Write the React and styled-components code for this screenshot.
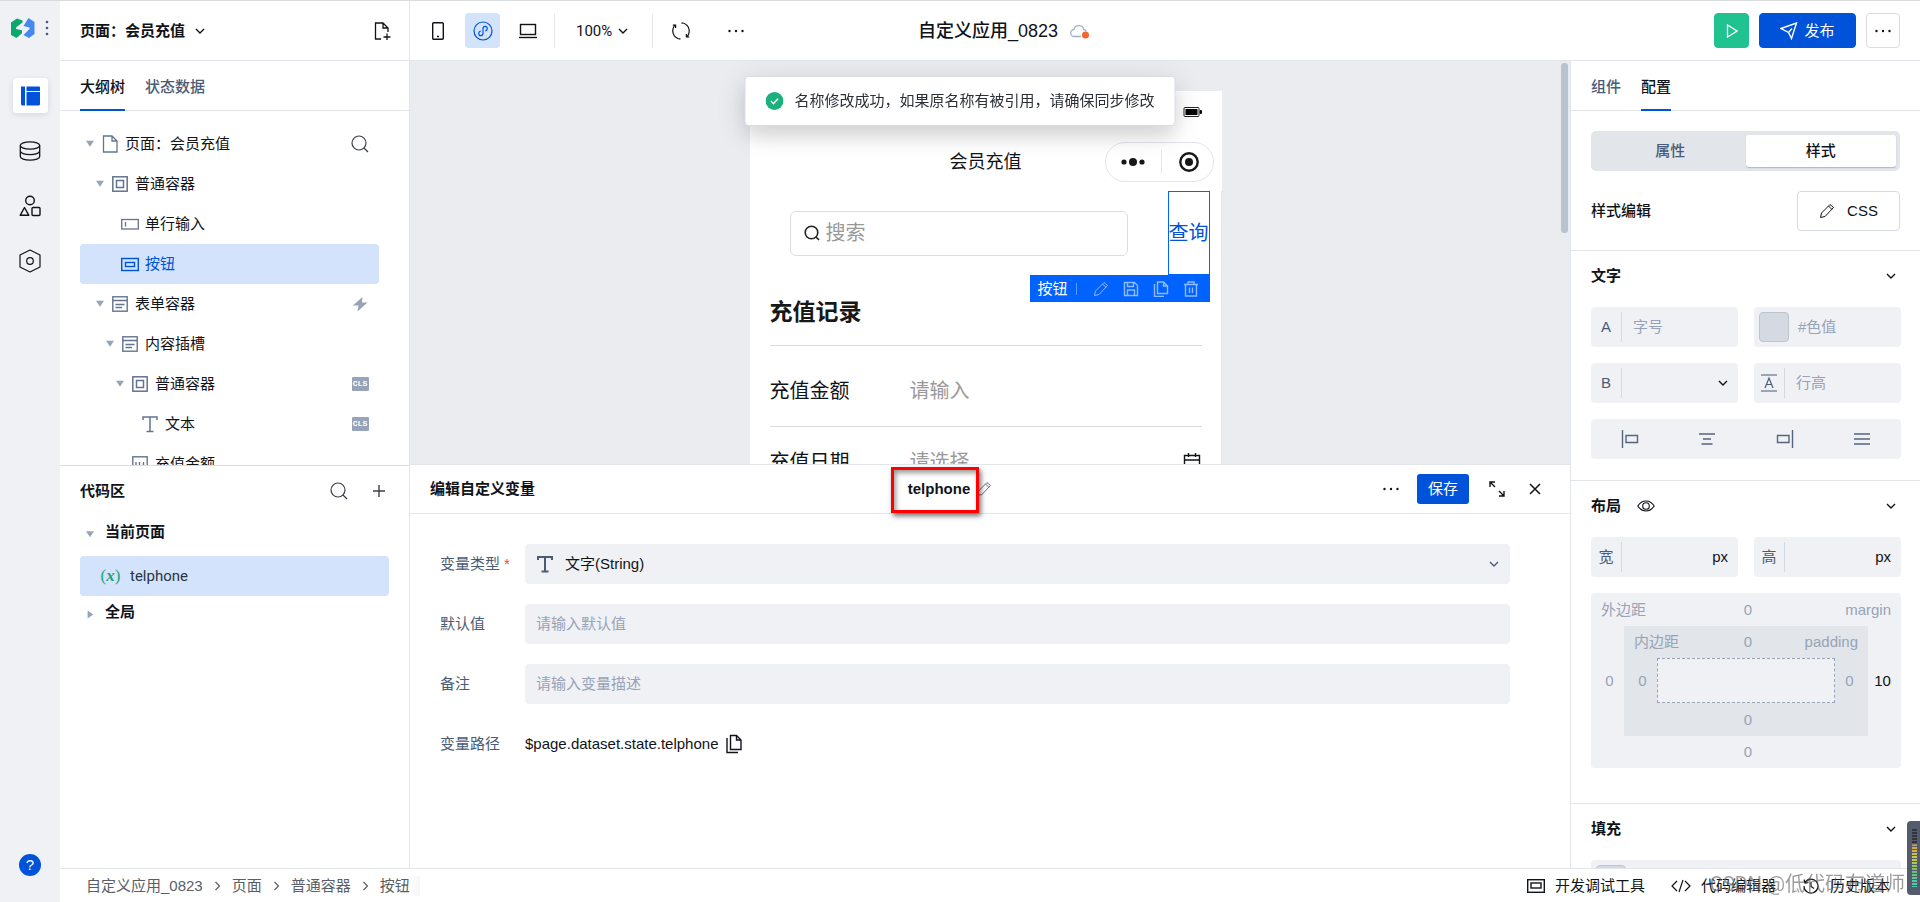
import React, { Fragment } from "react";
import styled, { createGlobalStyle, css } from "styled-components";

const color = {
  brand: "#0052d9",
  select: "#0062ff",
  active: "#d3e3fc",
  ink: "#101318",
  label: "#4b5b76",
  muted: "#97a3b7",
  line: "#e2e5eb",
  field: "#f0f1f5",
  canvas: "#ebecf0",
};

const GlobalStyle = createGlobalStyle`
  *, *::before, *::after {
    box-sizing: border-box;
  }

  body {
    margin: 0;
    background: #fff;
    color: ${color.ink};
    font: 15px/20px "Liberation Sans", "Noto Sans CJK SC", sans-serif;
  }

  button, input, select {
    margin: 0;
    padding: 0;
    border: 0;
    background: none;
    color: inherit;
    font: inherit;
  }

  button {
    cursor: pointer;
  }

  svg {
    display: block;
    flex: none;
  }

  h1, h2, h3, p {
    margin: 0;
    font-size: 15px;
  }
`;

/* ---------- icons ---------- */

const Icon = ({ w = 18, h = w, sw = 1, children, ...rest }) => (
  <svg
    width={w}
    height={h}
    viewBox={`0 0 ${w} ${h}`}
    fill="none"
    stroke="currentColor"
    strokeWidth={sw}
    aria-hidden="true"
    {...rest}
  >
    {children}
  </svg>
);

const Logo = () => (
  <svg width="24" height="20" viewBox="0 0 24 20" aria-hidden="true">
    <path
      fill="#0aa86e"
      d="M0 4.500 6 .6l5.500 2v2L5 9.500v1.500l6 1.200v3L5.500 20 0 17z"
    />
    <path
      fill="#4787f0"
      d="M17.500 0 23.500 4v12L18 20l-5.500-3 6-6V9.500l-6-1.500z"
    />
  </svg>
);

const Chevron = () => (
  <Icon w={10} sw={1.4}>
    <path d="M1 3l4 4 4-4" />
  </Icon>
);

const ChevronRight = () => (
  <Icon w={7} h={10} sw={1.2}>
    <path d="M1.500 1l4 4-4 4" />
  </Icon>
);

const Search = ({ sw = 1.2 }) => (
  <Icon w={18} sw={sw}>
    <circle cx="8" cy="8" r="7" />
    <path d="M13 13l4 4" />
  </Icon>
);

const Dots = () => (
  <Icon w={18} h={4} fill="currentColor" stroke="none">
    <circle cx="2.500" cy="2" r="1.200" />
    <circle cx="9" cy="2" r="1.200" />
    <circle cx="15.500" cy="2" r="1.200" />
  </Icon>
);

const Pencil = () => (
  <Icon w={16} sw={1}>
    <path d="M1.500 14.500l1-4.500 8.500-8.500 3.500 3L6 13.500zM9.500 3l3.300 3.300" />
  </Icon>
);

const Copy = () => (
  <Icon w={18} h={20} sw={1.4}>
    <path d="M5.500 1.500h6l4.500 4.500v9.500H5.500zM11.500 1.500V6H16M2 4v14.500h11" />
  </Icon>
);

const PageIcon = () => (
  <Icon w={18} sw={1.3}>
    <path d="M2.500 1h8.500l5 5v11H2.500zM11 1v5h5" />
  </Icon>
);

const BoxIcon = () => (
  <Icon w={18} sw={1.5}>
    <rect x="1.800" y="1.800" width="14.400" height="14.400" />
    <rect x="5.500" y="5.500" width="7" height="7" />
  </Icon>
);

const FormIcon = () => (
  <Icon w={18} sw={1.4}>
    <rect x="1.800" y="1.800" width="14.400" height="14.400" />
    <path d="M2 5.500h14M4.500 9.500h9M4.500 12.500h6.500" />
  </Icon>
);

const InputIcon = () => (
  <Icon w={18} sw={1.3}>
    <rect x=".7" y="4.500" width="16.600" height="9.500" />
    <path d="M4.500 7v4.500" />
  </Icon>
);

const ButtonIcon = () => (
  <Icon w={18} sw={1.4}>
    <rect x=".7" y="3.500" width="16.600" height="12" />
    <rect x="4.500" y="7.500" width="9" height="4" />
  </Icon>
);

const TextIcon = ({ sw = 1.5 }) => (
  <Icon w={18} sw={sw}>
    <path d="M2 5V2h14v3M9 2v14.500M5.500 16.500h7" />
  </Icon>
);

const NumberIcon = () => (
  <Icon w={18} sw={1.4}>
    <rect x="1.800" y="1.800" width="14.400" height="14.400" />
    <path d="M5 7v4M8.500 7v4M12.500 7v4" />
  </Icon>
);

const Bolt = () => (
  <Icon w={16} fill="currentColor" stroke="none">
    <path d="M10.500 1L.8 9.500h5.700L5.500 15.500 15.500 6.500H10z" />
  </Icon>
);

/* ---------- shell ---------- */

const Shell = styled.div`
  display: grid;
  grid-template-columns: 60px minmax(0, 1fr);
  height: 100vh;
  overflow: hidden;
  border-top: 1px solid #dadbdd;
`;

const Rail = styled.nav`
  display: flex;
  flex-direction: column;
  align-items: center;
  gap: 20px;
  padding-bottom: 26px;
  background: ${color.field};
`;

const RailTop = styled.div`
  display: flex;
  align-items: center;
  gap: 10px;
  height: 57px;
  padding-bottom: 4px;
`;

const RailButton = styled.button`
  display: grid;
  place-items: center;
  width: 35px;
  height: 35px;
  border-radius: 4px;
  ${(p) =>
    p.$active &&
    css`
      background: #fff;
      color: ${color.brand};
      box-shadow: 0 2px 6px rgba(30, 45, 80, 0.12);
    `}
`;

const Help = styled.button`
  width: 22px;
  height: 22px;
  margin-top: auto;
  border-radius: 50%;
  background: ${color.brand};
  color: #fff;
  line-height: 22px;
`;

const Main = styled.div`
  display: flex;
  flex-direction: column;
  min-width: 0;
  min-height: 0;
`;

const columns = css`
  display: grid;
  grid-template-columns: 350px minmax(0, 1fr) 350px;
`;

const TopBar = styled.header`
  ${columns}
  flex: none;
  height: 60px;
  border-bottom: 1px solid ${color.line};
`;

const PageName = styled.div`
  display: flex;
  align-items: center;
  justify-content: space-between;
  padding: 0 17px 0 20px;
  border-right: 1px solid ${color.line};
`;

const PageSwitch = styled.button`
  display: flex;
  align-items: center;
  gap: 10px;
  font-weight: 600;
`;

const IconButton = styled.button`
  display: grid;
  place-items: center;
  width: ${(p) => p.$w || 20}px;
  height: 20px;
  color: ${(p) => p.$color || "inherit"};
`;

const Tools = styled.div`
  display: grid;
  grid-template-columns: 1fr auto 1fr;
  align-items: center;
`;

const ToolGroup = styled.div`
  display: flex;
  align-items: center;
  padding-left: 10px;
`;

const Tool = styled.button`
  display: grid;
  place-items: center;
  width: 35px;
  height: 35px;
  margin-right: ${(p) => p.$gap || 10}px;
  border-radius: 4px;
  background: ${(p) => (p.$active ? color.active : "none")};
  color: ${(p) => (p.$active ? color.brand : "inherit")};
`;

const Rule = styled.span`
  width: 1px;
  height: ${(p) => p.$h || 34}px;
  background: ${(p) => p.$color || color.line};
`;

const Zoom = styled.button`
  display: flex;
  align-items: center;
  gap: 6px;
  padding: 0 24px 0 21px;
  font-family: Roboto, sans-serif;
`;

const MoreTools = styled.div`
  display: flex;
  padding-left: 10px;
`;

const AppTitle = styled.h1`
  display: flex;
  align-items: center;
  gap: 12px;
  padding-left: 28px;
  font-size: 18px;
  font-weight: 500;
`;

const Actions = styled.div`
  display: flex;
  align-items: center;
  justify-content: flex-end;
  gap: 10px;
  padding-right: 20px;
`;

const Action = styled.button`
  display: flex;
  align-items: center;
  justify-content: center;
  gap: 6px;
  width: ${(p) => p.$w || 35}px;
  height: 35px;
  border: 1px solid ${(p) => p.$border || p.$bg};
  border-radius: 4px;
  background: ${(p) => p.$bg};
  color: ${(p) => p.$color || "#fff"};
`;

const Work = styled.div`
  ${columns}
  grid-template-rows: minmax(0, 1fr);
  flex: 1;
  min-height: 0;
`;

const Split = styled.div`
  display: grid;
  grid-template-rows: ${(p) => p.$top || "50%"} minmax(0, 1fr);
  min-width: 0;
  min-height: 0;
`;

/* ---------- left column ---------- */

const LeftColumn = styled(Split)`
  border-right: 1px solid ${color.line};
`;

const Pane = styled.section`
  display: flex;
  flex-direction: column;
  min-height: 0;
  overflow: hidden;
  border-top: ${(p) => (p.$ruled ? `1px solid #d9dce3` : "0")};
`;

const Tabs = styled.div`
  display: flex;
  flex: none;
  gap: 20px;
  height: 50px;
  padding: 0 20px;
  border-bottom: 1px solid ${color.line};
`;

const Tab = styled.button`
  height: 50px;
  padding-top: 3px;
  border-bottom: 2px solid ${(p) => (p.$active ? color.brand : "transparent")};
  color: ${(p) => (p.$active ? color.ink : color.label)};
  font-weight: 500;
`;

const Tree = styled.div`
  flex: 1;
  min-height: 0;
  overflow: hidden;
  padding: 13px 30px 0 20px;
`;

const TreeRow = styled.div`
  display: flex;
  align-items: center;
  height: 40px;
  padding: 0 10px 0 ${(p) => 6 + p.$level * 10}px;
  border-radius: 4px;
  background: ${(p) => (p.$active ? color.active : "none")};
  color: ${(p) => (p.$active ? color.brand : color.ink)};
`;

const Caret = styled.span`
  width: 8px;
  height: 8px;
  flex: none;
  background: ${(p) => (p.$hidden ? "none" : color.muted)};
  clip-path: ${(p) =>
    p.$closed
      ? "polygon(20% 0, 90% 50%, 20% 100%)"
      : "polygon(0 10%, 100% 10%, 50% 85%)"};
`;

const TreeIcon = styled.span`
  margin: 0 6px 0 7px;
  color: ${(p) => (p.$active ? color.brand : "#64748f")};
`;

const TreeEnd = styled.span`
  display: grid;
  place-items: center;
  min-width: 18px;
  margin-left: auto;
  color: ${(p) => (p.$dark ? "#3a3f48" : color.muted)};
`;

const Cls = styled.span`
  width: 17px;
  height: 14px;
  border-radius: 1px;
  background: ${color.muted};
  color: #fff;
  font: bold 8px/14px "Liberation Mono", monospace;
  text-align: center;
`;

const CodeHead = styled.div`
  display: flex;
  align-items: center;
  gap: 20px;
  height: 50px;
  padding: 0 20px;

  h2 {
    margin-right: auto;
    font-weight: 600;
  }
`;

const CodeGroup = styled.button`
  display: flex;
  align-items: center;
  gap: 11px;
  width: 100%;
  height: 40px;
  padding: 0 0 8px 26px;
  font-weight: 600;

  ${Caret} {
    margin-top: 6px;
  }
`;

const CodeItem = styled.button`
  display: flex;
  align-items: center;
  gap: 8px;
  height: 40px;
  margin: 0 20px;
  padding-left: 19px;
  border-radius: 4px;
  background: ${color.active};
  color: #2a3342;
  font-family: Roboto, sans-serif;
`;

const VarMark = styled.span`
  width: 23px;
  color: #1fa46e;
  font: 17px/20px "Liberation Serif", serif;
  text-align: center;

  i {
    font-weight: bold;
  }
`;

/* ---------- canvas ---------- */

const Canvas = styled.div`
  display: flex;
  min-height: 0;
  overflow: hidden;
  padding: 30px 0 0;
  background: ${color.canvas};
`;

const Phone = styled.div`
  width: 472px;
  margin: 0 auto;
`;

const ScrollTrack = styled.div`
  width: 8px;
  margin: -28px 1px 0 0;
  padding-right: 1px;
`;

const ScrollThumb = styled.div`
  height: 170px;
  border-radius: 3px;
  background: #b9c3ce;
`;

const StatusBar = styled.div`
  display: flex;
  justify-content: flex-end;
  height: 41px;
  padding: 16px 19px 0 0;
  background: #fff;
`;

const NavBar = styled.div`
  display: grid;
  grid-template-columns: 1fr auto 1fr;
  align-items: center;
  height: 59px;
  padding: 0 8px;
  background: #fff;
  font-size: 18px;
`;

const Capsule = styled.div`
  display: flex;
  align-items: center;
  justify-content: space-between;
  justify-self: end;
  width: 109px;
  height: 40px;
  padding: 0 14px 0 15px;
  border: 1px solid ${color.line};
  border-radius: 20px;
`;

const PhoneBody = styled.div`
  height: 340px;
  background: #fff;
  border-right: 1px solid ${color.line};
  font-size: 20px;
  line-height: 28px;
`;

const SearchRow = styled.div`
  display: flex;
  align-items: center;
  justify-content: space-between;
  height: 84px;
  padding: 0 11px 0 40px;
`;

const SearchBox = styled.label`
  display: flex;
  align-items: center;
  gap: 6px;
  width: 338px;
  height: 45px;
  padding-left: 13px;
  border: 1px solid #dcdddf;
  border-radius: 6px;
  color: #222;
`;

const PlainInput = styled.input`
  flex: 1;
  width: 100%;
  min-width: 0;
  outline: none;

  &::placeholder {
    color: ${(p) => p.$hint || color.muted};
    opacity: 1;
  }
`;

const Picked = styled.div`
  position: relative;
  display: grid;
  place-items: center;
  width: 42px;
  height: 84px;
  border: 1px solid ${color.select};
  color: ${color.brand};
  white-space: nowrap;
`;

const PickedBar = styled.div`
  position: absolute;
  top: calc(100% + 1px);
  right: -1px;
  display: flex;
  align-items: center;
  gap: 10px;
  width: 180px;
  height: 27px;
  padding-left: 8px;
  background: ${color.select};
  color: #8fbaff;
  font-size: 15px;

  span:first-child {
    margin-right: -2px;
    color: #fff;
  }

  ${Rule} {
    margin-right: 4px;
  }
`;

const RecordHead = styled.h2`
  height: 71px;
  margin: 0 19px 10px 20px;
  border-bottom: 1px solid #dcdcdc;
  color: #181818;
  font-size: 23px;
  line-height: 74px;
`;

const RecordRow = styled.label`
  display: grid;
  grid-template-columns: 140px minmax(0, 1fr) auto;
  align-items: center;
  height: 71px;
  margin: 0 19px 0 20px;
  border-bottom: 1px solid #dcdcdc;
`;

/* ---------- variable editor ---------- */

const Editor = styled.section`
  min-height: 0;
  overflow: hidden;
  background: #fff;
  border-top: 1px solid ${color.line};
`;

const EditorHead = styled.div`
  display: flex;
  align-items: center;
  justify-content: space-between;
  height: 49px;
  padding: 0 25px 0 20px;
  border-bottom: 1px solid ${color.line};

  h2 {
    font-weight: 600;
  }
`;

const VarName = styled.div`
  position: relative;
  display: flex;
  align-items: center;
  gap: 6px;
  color: #66707f;
  font-weight: bold;

  b {
    color: ${color.ink};
  }
`;

const Highlight = styled.span`
  position: absolute;
  top: -12px;
  left: -17px;
  width: 88px;
  height: 46px;
  border: 3px solid #f00;
  box-shadow: 2px 3px 5px rgba(0, 0, 0, 0.55),
    inset 2px 3px 5px rgba(0, 0, 0, 0.4);
  pointer-events: none;
`;

const EditorActions = styled.div`
  display: flex;
  align-items: center;
  gap: 16px;
  padding-left: 16px;
`;

const Save = styled.button`
  width: 52px;
  height: 30px;
  border-radius: 3px;
  background: ${color.brand};
  color: #fff;
`;

const EditorForm = styled.form`
  display: grid;
  grid-template-columns: 85px minmax(0, 1fr);
  row-gap: 20px;
  padding: 30px 60px 0 30px;
`;

const Label = styled.label`
  height: 40px;
  color: ${color.label};
  line-height: 40px;

  i {
    margin-left: 4px;
    color: #e5484d;
    font-style: normal;
  }
`;

const Field = styled.div`
  display: flex;
  align-items: center;
  gap: 11px;
  height: 40px;
  padding: 0 11px;
  border-radius: 4px;
  background: ${color.field};
  color: ${(p) => p.$color || color.ink};
`;

const PlainSelect = styled.select`
  flex: 1;
  min-width: 0;
  height: 30px;
  appearance: none;
  outline: none;
  color: ${color.ink};
`;

const PathText = styled.div`
  display: flex;
  align-items: center;
  gap: 6px;
  height: 40px;
`;

/* ---------- right column ---------- */

const Config = styled.aside`
  display: flex;
  flex-direction: column;
  min-height: 0;
  overflow: hidden;
  border-left: 1px solid ${color.line};
`;

const Segment = styled.div`
  display: grid;
  grid-template-columns: 1fr 1fr;
  height: 40px;
  margin: 20px;
  padding: 4px;
  flex: none;
  border-radius: 5px;
  background: #e2e5e9;
`;

const SegmentItem = styled.button`
  border-radius: 3px;
  background: ${(p) => (p.$active ? "#fff" : "none")};
  box-shadow: ${(p) => (p.$active ? "0 1px 1px #aebac8" : "none")};
  color: ${(p) => (p.$active ? color.ink : color.label)};
  font-weight: 500;
`;

const StyleRow = styled.div`
  display: flex;
  align-items: center;
  justify-content: space-between;
  flex: none;
  padding: 0 20px 19px;
  font-weight: 500;
`;

const CssButton = styled.button`
  display: flex;
  align-items: center;
  justify-content: center;
  gap: 12px;
  width: 103px;
  height: 40px;
  border: 1px solid #d5dae3;
  border-radius: 4px;
`;

const Group = styled.section`
  flex: none;
  padding: 0 19px ${(p) => p.$pb || 0}px 20px;
  border-top: 1px solid ${color.line};
`;

const GroupHead = styled.div`
  display: flex;
  align-items: center;
  gap: 16px;
  height: 50px;
  margin-bottom: 6px;

  h3 {
    font-weight: 600;
  }

  svg:last-child {
    margin: 0 5px 0 auto;
  }
`;

const Pair = styled.div`
  display: grid;
  grid-template-columns: repeat(2, minmax(0, 1fr));
  gap: 16px;
  margin-bottom: 16px;
`;

const Cell = styled.label`
  display: flex;
  align-items: center;
  gap: 11px;
  height: 40px;
  padding: 0 10px 0 0;
  border-radius: 4px;
  background: ${color.field};
  color: ${color.ink};
`;

const CellMark = styled.span`
  display: grid;
  place-items: center;
  width: 31px;
  height: 30px;
  flex: none;
  border-right: 1px solid #d3d9e1;
  color: ${color.label};
`;

const Swatch = styled.span`
  width: 30px;
  height: 30px;
  flex: none;
  margin: 0 -2px 0 5px;
  border: 1px solid #bcc4ce;
  border-radius: 4px;
  background: #d5dae2;
`;

const AlignBar = styled.div`
  display: grid;
  grid-template-columns: repeat(4, 1fr);
  height: 40px;
  border-radius: 4px;
  background: ${color.field};
  color: #56647d;
`;

const AlignButton = styled.button`
  display: grid;
  place-items: center;
`;

const Spacing = styled.div`
  display: grid;
  grid-template-columns: 33px minmax(0, 1fr) 33px;
  grid-template-rows: ${(p) => p.$rows};
  place-items: center;
  border-radius: ${(p) => (p.$inner ? 0 : 4)}px;
  background: ${(p) => (p.$inner ? "#e2e5e9" : color.field)};
  color: ${color.muted};
  width: 100%;
`;

const SpacingHead = styled.div`
  display: grid;
  grid-template-columns: 1fr 32px 1fr;
  grid-column: 1 / -1;
  justify-self: stretch;
  padding: 0 10px;

  span:last-child {
    text-align: right;
  }
`;

const SpacingFoot = styled.div`
  grid-column: 1 / -1;
`;

const SpacingInput = styled.input`
  width: 32px;
  padding: ${(p) => (p.$right ? "0 4px 0 0" : "0 0 0 4px")};
  text-align: center;
  color: ${(p) => (p.$set ? color.ink : color.muted)};
`;

const Content = styled.div`
  align-self: stretch;
  justify-self: stretch;
  border: 1px dashed ${color.muted};
  background: ${color.field};
`;

/* ---------- footer and overlays ---------- */

const Footer = styled.footer`
  display: flex;
  align-items: center;
  justify-content: space-between;
  flex: none;
  height: 34px;
  padding: 0 30px 0 26px;
  border-top: 1px solid ${color.line};
`;

const Crumbs = styled.nav`
  display: flex;
  align-items: center;
  gap: 11px;
  color: #5a5e66;
`;

const Crumb = styled.a`
  color: inherit;
  text-decoration: none;

  &:last-child {
    margin-right: -10px;
    padding-right: 10px;
    background: linear-gradient(90deg, #fff 70%, #f5f6f8);
  }
`;

const FooterTools = styled.div`
  display: flex;
  gap: 26px;
`;

const FooterTool = styled.button`
  display: flex;
  align-items: center;
  gap: 10px;
`;

const Toast = styled.div`
  position: fixed;
  top: 76px;
  left: 50%;
  display: flex;
  align-items: center;
  gap: 11px;
  height: 50px;
  padding: 0 20px;
  transform: translateX(-50%);
  border: 1px solid #d8dce6;
  border-radius: 4px;
  background: #fff;
  box-shadow: 0 6px 30px rgba(0, 0, 0, 0.14), 0 12px 18px rgba(0, 0, 0, 0.08);
  color: #2b2f36;
  white-space: nowrap;
`;

const Watermark = styled.div`
  position: fixed;
  right: 15px;
  bottom: 5px;
  color: rgba(90, 90, 90, 0.6);
  font: 20px/26px Roboto, "Noto Sans CJK SC", sans-serif;
  pointer-events: none;
`;

const Gauge = styled.div`
  position: fixed;
  right: 0;
  bottom: 7px;
  width: 13px;
  height: 74px;
  padding: 8px 3px 8px 5px;
  border-radius: 4px 0 0 4px;
  background: #535b6c;
`;

const GaugeBar = styled.div`
  height: 100%;
  background: repeating-linear-gradient(
      180deg,
      transparent 0 2px,
      #535b6c 2px 3px
    ),
    linear-gradient(180deg, #2f3540 26%, #d8a04c 27%, #c9c94c 50%, #6cc07c 75%, #4cc9b8);
`;

/* ---------- data ---------- */

const treeRows = [
  { name: "页面：会员充值", icon: PageIcon, level: 0, open: true, end: "search" },
  { name: "普通容器", icon: BoxIcon, level: 1, open: true },
  { name: "单行输入", icon: InputIcon, level: 2 },
  { name: "按钮", icon: ButtonIcon, level: 2, active: true },
  { name: "表单容器", icon: FormIcon, level: 1, open: true, end: "bolt" },
  { name: "内容插槽", icon: FormIcon, level: 2, open: true },
  { name: "普通容器", icon: BoxIcon, level: 3, open: true, end: "cls" },
  { name: "文本", icon: TextIcon, level: 4, end: "cls" },
  { name: "充值金额", icon: NumberIcon, level: 3 },
];

const crumbs = ["自定义应用_0823", "页面", "普通容器", "按钮"];

/* ---------- parts ---------- */

const SideRail = () => (
  <Rail>
    <RailTop>
      <Logo />
      <Icon w={4} h={16} fill="#4b5b76" stroke="none">
        <circle cx="2" cy="2" r="1.300" />
        <circle cx="2" cy="8" r="1.300" />
        <circle cx="2" cy="14" r="1.300" />
      </Icon>
    </RailTop>
    <RailButton $active aria-label="页面设计">
      <Icon w={20} fill="currentColor" stroke="none">
        <path d="M1 .5h4v19H2l-1-1zM6.500.5H19a1 1 0 0 1 1 1v3.500H6.500zM6.500 6H20v12.500l-1 1H6.500z" />
      </Icon>
    </RailButton>
    <RailButton aria-label="数据源">
      <Icon w={22} h={20} sw={1.3}>
        <ellipse cx="11" cy="4.500" rx="9.700" ry="3.700" />
        <path d="M1.300 4.500v11c0 2 4.300 3.700 9.700 3.700s9.700-1.700 9.700-3.700v-11M1.300 10c0 2 4.300 3.700 9.700 3.700s9.700-1.700 9.700-3.700" />
      </Icon>
    </RailButton>
    <RailButton aria-label="组件库">
      <Icon w={22} sw={1.4}>
        <circle cx="11" cy="5.500" r="4.300" />
        <path d="M5.500 12.500l4.300 7.800H1.200z" strokeLinejoin="round" />
        <rect x="13" y="12.500" width="8" height="8" rx="1" />
      </Icon>
    </RailButton>
    <RailButton aria-label="设置">
      <Icon w={22} h={24} sw={1.2}>
        <path d="M11 1l10 5v12l-10 5L1 18V6z" strokeLinejoin="round" />
        <circle cx="11" cy="12" r="3.300" />
      </Icon>
    </RailButton>
    <Help aria-label="帮助">?</Help>
  </Rail>
);

const Header = () => (
  <TopBar>
    <PageName>
      <PageSwitch>
        页面：会员充值
        <Chevron />
      </PageSwitch>
      <IconButton aria-label="新建页面">
        <Icon w={18} h={20} sw={1.3}>
          <path d="M8 18H2.500V2H10l5 5v4M10 2v5h5M14 12.500v6.500M10.500 16h7" />
        </Icon>
      </IconButton>
    </PageName>
    <Tools>
      <ToolGroup>
        <Tool aria-label="手机">
          <Icon w={14} h={18} sw={1.4}>
            <rect x="1.700" y=".7" width="10.600" height="16.600" rx="1" />
            <path d="M6 14.500h2" />
          </Icon>
        </Tool>
        <Tool $active aria-label="小程序">
          <Icon w={20} sw={1.2}>
            <circle cx="10" cy="10" r="9" />
            <path d="M12.300 9.900c1.300-.3 2-1.200 2-2.300 0-1.300-1-2.200-2.200-2.200S10 6.300 10 7.700v4.600c0 1.400-.9 2.300-2.100 2.300s-2.200-.9-2.200-2.200c0-1.100.7-2 2-2.300" />
          </Icon>
        </Tool>
        <Tool $gap={9} aria-label="电脑">
          <Icon w={18} h={16} sw={1.4}>
            <rect x="1.500" y="1.500" width="15" height="10" />
            <path d="M0 14.500h18" />
          </Icon>
        </Tool>
        <Rule />
        <Zoom>
          100%
          <Chevron />
        </Zoom>
        <Rule />
        <MoreTools>
          <Tool $gap={20} aria-label="刷新">
            <Icon w={20} sw={1.2}>
              <path d="M7.500 17.800A8.200 8.200 0 0 1 4.200 4.200M12.500 2.200a8.200 8.200 0 0 1 3.300 13.600" />
              <path d="M1.800 4.200h2.800V7M18.200 15.800h-2.800V13M7.500 17.800h2M12.500 2.200h-2" />
            </Icon>
          </Tool>
          <Tool aria-label="更多工具">
            <Dots />
          </Tool>
        </MoreTools>
      </ToolGroup>
      <AppTitle>
        自定义应用_0823
        <Icon w={20} h={16} sw={1.3} color="#a5afc0">
          <path d="M11 13.500H4.500a3.500 3.500 0 0 1-.5-7 5 5 0 0 1 9.700 0 3.500 3.500 0 0 1 2.500 1.800" />
          <circle cx="15.500" cy="12" r="3.500" fill="#f0682e" stroke="none" />
        </Icon>
      </AppTitle>
      <span />
    </Tools>
    <Actions>
      <Action $bg="#20c290" aria-label="预览">
        <Icon w={12} h={14} sw={1.3}>
          <path d="M1.500 1v12L11 7z" />
        </Icon>
      </Action>
      <Action $bg={color.brand} $w={97}>
        <Icon w={18} sw={1.4}>
          <path d="M1 6.500L16.500 1l-5 15.500-3-6z M8.500 10.500l3.500-4" />
        </Icon>
        发布
      </Action>
      <Action
        $bg="#fff"
        $border="#d8dce6"
        $color={color.ink}
        $w={34}
        aria-label="更多"
      >
        <Dots />
      </Action>
    </Actions>
  </TopBar>
);

const Outline = () => (
  <LeftColumn>
    <Pane>
      <Tabs role="tablist">
        <Tab role="tab" $active>
          大纲树
        </Tab>
        <Tab role="tab">状态数据</Tab>
      </Tabs>
      <Tree>
        {treeRows.map(({ name, icon: Glyph, level, open, active, end }, i) => (
          <TreeRow key={i} $level={level} $active={active}>
            <Caret $hidden={!open} />
            <TreeIcon $active={active}>
              <Glyph />
            </TreeIcon>
            {name}
            {end && (
              <TreeEnd $dark={end === "search"}>
                {end === "search" && <Search />}
                {end === "bolt" && <Bolt />}
                {end === "cls" && <Cls>CLS</Cls>}
              </TreeEnd>
            )}
          </TreeRow>
        ))}
      </Tree>
    </Pane>
    <Pane $ruled>
      <CodeHead>
        <h2>代码区</h2>
        <IconButton $color="#3a3f48" aria-label="搜索代码">
          <Search />
        </IconButton>
        <IconButton $color="#3a3f48" aria-label="新建">
          <Icon w={12} sw={1.4}>
            <path d="M6 0v12M0 6h12" />
          </Icon>
        </IconButton>
      </CodeHead>
      <CodeGroup>
        <Caret />
        当前页面
      </CodeGroup>
      <CodeItem>
        <VarMark>
          (<i>x</i>)
        </VarMark>
        telphone
      </CodeItem>
      <CodeGroup>
        <Caret $closed />
        全局
      </CodeGroup>
    </Pane>
  </LeftColumn>
);

const PhonePreview = () => (
  <Canvas>
    <Phone>
      <StatusBar>
        <Icon w={20} h={10}>
          <rect x="1" y=".5" width="15" height="9" rx="1" stroke="#222" />
          <rect x="2.500" y="2" width="12" height="6" fill="#000" stroke="none" />
          <path d="M17 3.500h1.500v3H17z" fill="#000" />
        </Icon>
      </StatusBar>
      <NavBar>
        <span />
        会员充值
        <Capsule>
          <Icon w={24} h={8} fill="#181818" stroke="none">
            <circle cx="3" cy="4" r="2.600" />
            <circle cx="12" cy="4" r="4" />
            <circle cx="21" cy="4" r="2.600" />
          </Icon>
          <Rule $h={23} />
          <Icon w={20} sw={2.4} color="#181818">
            <circle cx="10" cy="10" r="8.700" />
            <circle cx="10" cy="10" r="4" fill="#181818" stroke="none" />
          </Icon>
        </Capsule>
      </NavBar>
      <PhoneBody>
        <SearchRow>
          <SearchBox>
            <Icon w={16} sw={1.6}>
              <circle cx="7.500" cy="7.500" r="6.300" />
              <path d="M12 12l3 3" />
            </Icon>
            <PlainInput $hint="#999" placeholder="搜索" aria-label="搜索" />
          </SearchBox>
          <Picked>
            查询
            <PickedBar>
              <span>按钮</span>
              <Rule $h={12} $color="#5c9bff" />
              <IconButton aria-label="编辑">
                <Pencil />
              </IconButton>
              <IconButton aria-label="存为区块">
                <Icon w={16} sw={1.4}>
                  <path d="M1.500 1.500h10l3 3v10h-13zM4.500 1.500v4h6v-4M4.500 14.500V9h7v5.500" />
                </Icon>
              </IconButton>
              <IconButton aria-label="复制">
                <Icon w={16} sw={1.4}>
                  <path d="M4.500 1h6l4 4v7.500h-10zM10.500 1v4h4M1.500 3v12.500H11" />
                </Icon>
              </IconButton>
              <IconButton aria-label="删除">
                <Icon w={16} sw={1.4}>
                  <path d="M1 3.500h14M5 3.500V1h6v2.500M2.500 3.500v11.500h11V3.500M6.500 6.500v5.500M9.500 6.500v5.500" />
                </Icon>
              </IconButton>
            </PickedBar>
          </Picked>
        </SearchRow>
        <RecordHead>充值记录</RecordHead>
        <RecordRow>
          充值金额
          <PlainInput $hint="#999" placeholder="请输入" />
        </RecordRow>
        <RecordRow>
          充值日期
          <PlainInput $hint="#999" placeholder="请选择" />
          <Icon w={20} sw={1.4}>
            <path d="M2.500 3.500h15v14h-15zM2.500 8h15M6.500 1v4M13.500 1v4" />
          </Icon>
        </RecordRow>
      </PhoneBody>
    </Phone>
    <ScrollTrack>
      <ScrollThumb />
    </ScrollTrack>
  </Canvas>
);

const VariableEditor = () => (
  <Editor>
    <EditorHead>
      <h2>编辑自定义变量</h2>
      <VarName>
        <b>telphone</b>
        <IconButton $w={16} aria-label="修改名称">
          <Pencil />
        </IconButton>
        <Highlight />
      </VarName>
      <EditorActions>
        <IconButton aria-label="更多">
          <Dots />
        </IconButton>
        <Save>保存</Save>
        <IconButton $w={24} aria-label="展开">
          <Icon w={16} sw={1.4}>
            <path d="M1 6V1h5M1 1l5 5M15 10v5h-5M15 15l-5-5" />
          </Icon>
        </IconButton>
        <IconButton aria-label="关闭">
          <Icon w={12} sw={1.5}>
            <path d="M1 1l10 10M11 1L1 11" />
          </Icon>
        </IconButton>
      </EditorActions>
    </EditorHead>
    <EditorForm>
      <Label htmlFor="var-type">
        变量类型<i>*</i>
      </Label>
      <Field $color={color.label}>
        <TextIcon sw={2} />
        <PlainSelect id="var-type">
          <option>文字(String)</option>
        </PlainSelect>
        <Chevron />
      </Field>
      <Label htmlFor="var-default">默认值</Label>
      <Field>
        <PlainInput id="var-default" placeholder="请输入默认值" />
      </Field>
      <Label htmlFor="var-note">备注</Label>
      <Field>
        <PlainInput id="var-note" placeholder="请输入变量描述" />
      </Field>
      <Label as="span">变量路径</Label>
      <PathText>
        $page.dataset.state.telphone
        <IconButton $w={18} aria-label="复制路径">
          <Copy />
        </IconButton>
      </PathText>
    </EditorForm>
  </Editor>
);

const StylePanel = () => (
  <Config>
    <Tabs role="tablist">
      <Tab role="tab">组件</Tab>
      <Tab role="tab" $active>
        配置
      </Tab>
    </Tabs>
    <Segment>
      <SegmentItem>属性</SegmentItem>
      <SegmentItem $active>样式</SegmentItem>
    </Segment>
    <StyleRow>
      样式编辑
      <CssButton>
        <Pencil />
        CSS
      </CssButton>
    </StyleRow>
    <Group $pb={21}>
      <GroupHead>
        <h3>文字</h3>
        <Chevron />
      </GroupHead>
      <Pair>
        <Cell>
          <CellMark>A</CellMark>
          <PlainInput placeholder="字号" />
        </Cell>
        <Cell>
          <Swatch />
          <PlainInput placeholder="#色值" aria-label="色值" />
        </Cell>
        <Cell>
          <CellMark>B</CellMark>
          <PlainSelect aria-label="字重">
            <option></option>
          </PlainSelect>
          <Chevron />
        </Cell>
        <Cell>
          <CellMark>
            <Icon w={16} h={18} sw={1.2}>
              <path d="M0 1h16M0 17h16M4 14l4-10 4 10M5.500 10.500h5" />
            </Icon>
          </CellMark>
          <PlainInput placeholder="行高" aria-label="行高" />
        </Cell>
      </Pair>
      <AlignBar>
        <AlignButton aria-label="左对齐">
          <Icon w={18} sw={1.4}>
            <path d="M1.500 0v18M5 5.500h11.500v7H5z" />
          </Icon>
        </AlignButton>
        <AlignButton aria-label="居中">
          <Icon w={16} sw={1.3}>
            <path d="M0 3h16M4 8h8M2.500 13h11" />
          </Icon>
        </AlignButton>
        <AlignButton aria-label="右对齐">
          <Icon w={18} sw={1.4}>
            <path d="M16.500 0v18M13 5.500H1.500v7H13z" />
          </Icon>
        </AlignButton>
        <AlignButton aria-label="两端对齐">
          <Icon w={16} sw={1.3}>
            <path d="M0 3h16M0 8h16M0 13h16" />
          </Icon>
        </AlignButton>
      </AlignBar>
    </Group>
    <Group $pb={35}>
      <GroupHead>
        <h3>布局</h3>
        <Icon w={18} h={12} sw={1.1}>
          <path d="M.8 6C5 -.7 13 -.7 17.200 6 13 12.700 5 12.700 .8 6z" />
          <circle cx="9" cy="6" r="3.300" />
        </Icon>
        <Chevron />
      </GroupHead>
      <Pair>
        <Cell>
          <CellMark>宽</CellMark>
          <PlainInput />
          px
        </Cell>
        <Cell>
          <CellMark>高</CellMark>
          <PlainInput />
          px
        </Cell>
      </Pair>
      <Spacing $rows="33px 110px 32px">
        <SpacingHead>
          <span>外边距</span>
          <SpacingInput defaultValue="0" aria-label="上外边距" />
          <span>margin</span>
        </SpacingHead>
        <SpacingInput defaultValue="0" aria-label="左外边距" />
        <Spacing $inner $rows="32px 45px 33px">
          <SpacingHead>
            <span>内边距</span>
            <SpacingInput defaultValue="0" aria-label="上内边距" />
            <span>padding</span>
          </SpacingHead>
          <SpacingInput defaultValue="0" aria-label="左内边距" />
          <Content />
          <SpacingInput $right defaultValue="0" aria-label="右内边距" />
          <SpacingFoot>
            <SpacingInput defaultValue="0" aria-label="下内边距" />
          </SpacingFoot>
        </Spacing>
        <SpacingInput $right $set defaultValue="10" aria-label="右外边距" />
        <SpacingFoot>
          <SpacingInput defaultValue="0" aria-label="下外边距" />
        </SpacingFoot>
      </Spacing>
    </Group>
    <Group>
      <GroupHead>
        <h3>填充</h3>
        <Chevron />
      </GroupHead>
      <Cell>
        <Swatch />
        <PlainInput aria-label="填充色" />
      </Cell>
    </Group>
  </Config>
);

const BottomBar = () => (
  <Footer>
    <Crumbs>
      {crumbs.map((name, i) => (
        <Fragment key={name}>
          {i > 0 && <ChevronRight />}
          <Crumb href="#">{name}</Crumb>
        </Fragment>
      ))}
    </Crumbs>
    <FooterTools>
      <FooterTool>
        <Icon w={18} h={14} sw={1.4}>
          <rect x=".7" y=".7" width="16.600" height="12.600" />
          <rect x="4" y="4" width="10" height="5" />
        </Icon>
        开发调试工具
      </FooterTool>
      <FooterTool>
        <Icon w={20} h={14} sw={1.2}>
          <path d="M6 2L1 7l5 5M14 2l5 5-5 5M12 1L8 13" />
        </Icon>
        代码编辑器
      </FooterTool>
      <FooterTool>
        <Icon w={18} h={16} sw={1.2}>
          <path d="M3 4.500A7 7 0 1 1 2 8M2 1.500L3 5l3.500-.5M9 4v4.500l3 2" />
        </Icon>
        历史版本
      </FooterTool>
    </FooterTools>
  </Footer>
);

const App = () => (
  <Fragment>
    <GlobalStyle />
    <Shell>
      <SideRail />
      <Main>
        <Header />
        <Work>
          <Outline />
          <Split $top="calc(50% - 1px)">
            <PhonePreview />
            <VariableEditor />
          </Split>
          <StylePanel />
        </Work>
        <BottomBar />
      </Main>
    </Shell>
    <Toast role="status">
      <Icon w={18} sw={1.5}>
        <circle cx="9" cy="9" r="9" fill="#1bb07c" stroke="none" />
        <path d="M5.500 9l2.500 2.700 4.500-5" stroke="#fff" />
      </Icon>
      名称修改成功，如果原名称有被引用，请确保同步修改
    </Toast>
    <Watermark>CSDN @低代码布道师</Watermark>
    <Gauge>
      <GaugeBar />
    </Gauge>
  </Fragment>
);

export default App;
